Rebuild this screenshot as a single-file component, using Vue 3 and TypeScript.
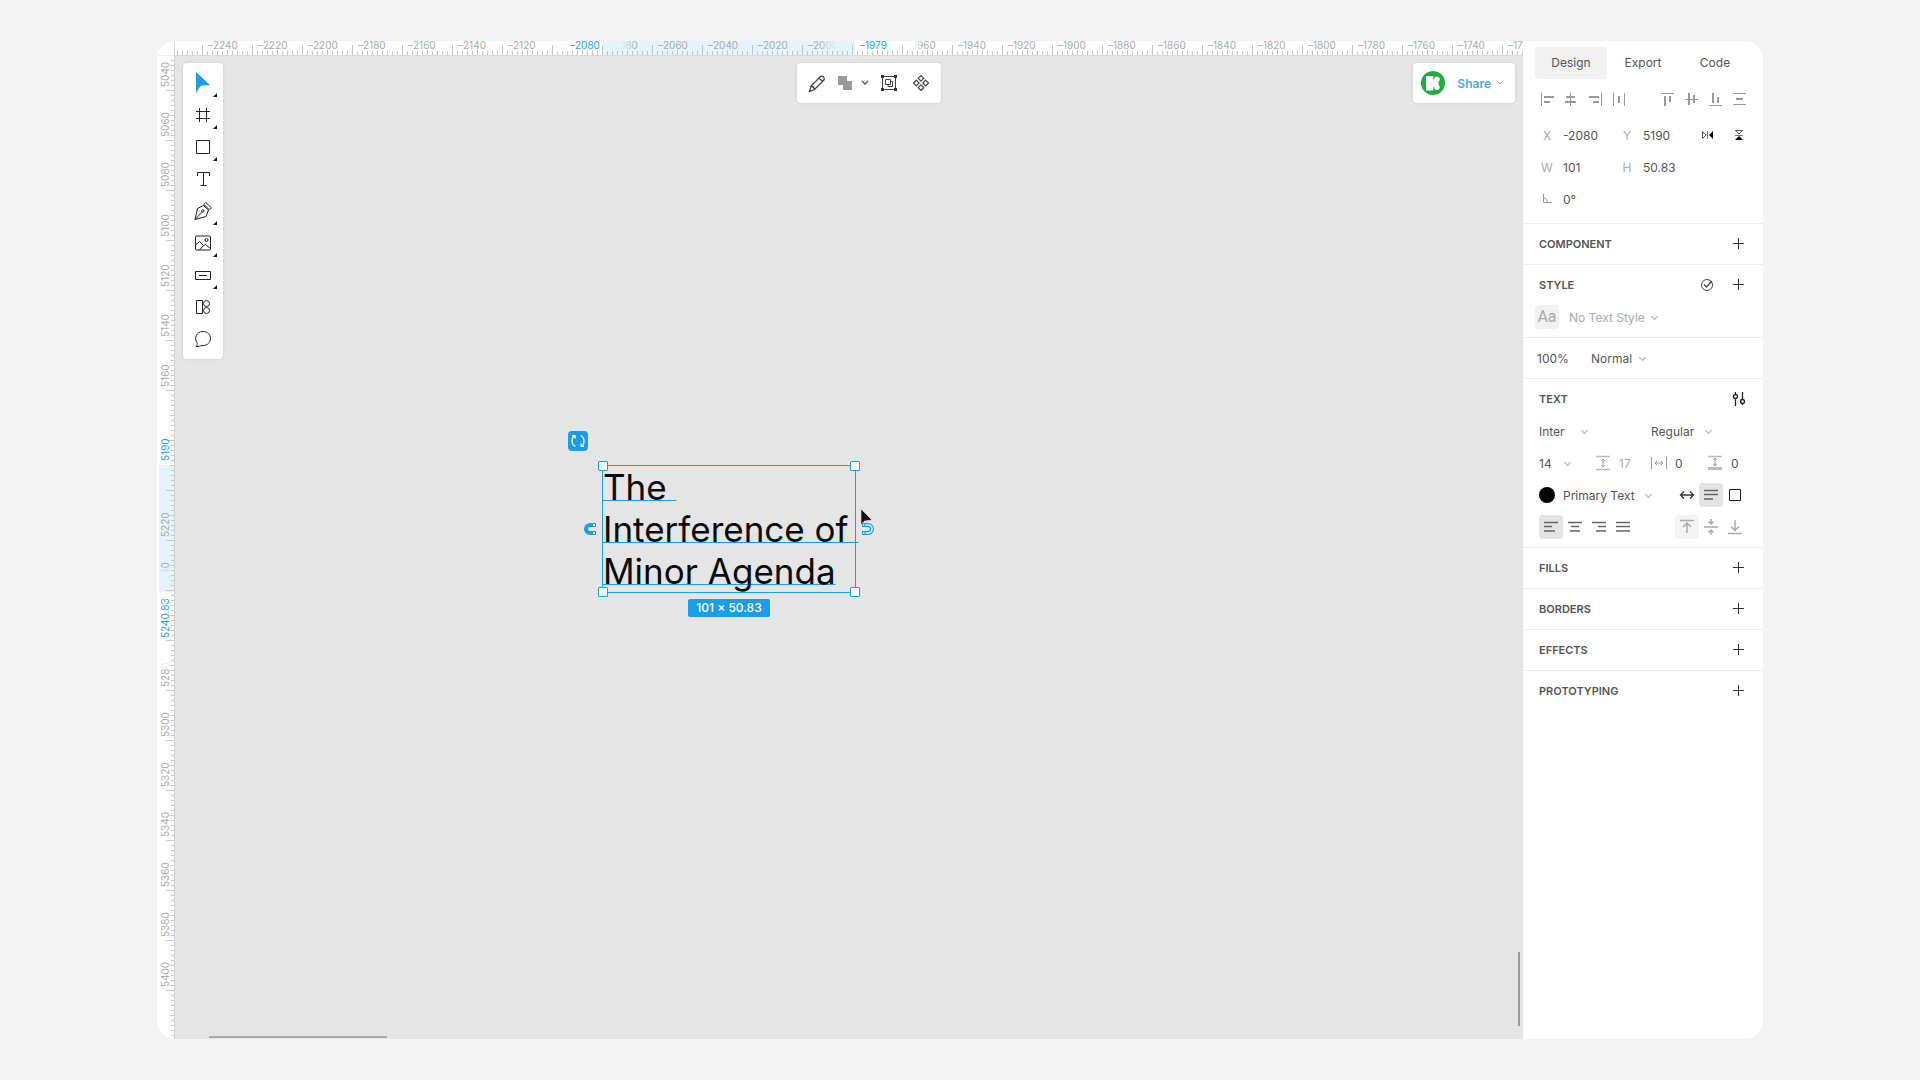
<script setup lang="ts">
import { ref } from 'vue'

interface Tool {
  name: string
  strokes: string
  fill?: string
  menu: boolean
}

interface Glyph {
  name: string
  light?: string
  bold?: string
}

const tools: Tool[] = [
  { name: 'Move', strokes: '', fill: 'M5 1 L19 14 L11 14.500 Q9.500 14.700 8.500 16.500 L5 22 Z', menu: true },
  { name: 'Frame', strokes: 'M8.500 5v14M15.500 5v14M5 8.500h14M5 15.500h14', menu: true },
  { name: 'Rectangle', strokes: 'M5.500 5.500h13v13h-13z', menu: true },
  { name: 'Text', strokes: 'M6.500 9V5.500h12V9M12.500 5.500v13M9.500 18.500h6', menu: false },
  { name: 'Pen', strokes: 'M4 20.500L6.500 9.500L12.500 6.500L17.500 11L15 17.500ZM4 20.500L11 13.200M13 12a1.200 1.200 0 1 1-2.400 0a1.200 1.200 0 1 1 2.400 0M12.800 5.500L14.800 3.500L20.500 8.800L18.500 10.800Z', menu: true },
  { name: 'Image', strokes: 'M5.500 5h13q1 0 1 1v12q0 1-1 1h-13q-1 0-1-1V6q0-1 1-1zM4.500 14L8.500 10.500L12.500 14.500L8.500 19M12 14.800L14.500 13.500L19.500 17.500M17 9a1.500 1.500 0 1 1-3 0a1.500 1.500 0 1 1 3 0', menu: true },
  { name: 'Button', strokes: 'M4.500 8.500h15v8h-15zM8 12.500h8', menu: true },
  { name: 'Components', strokes: 'M5.500 5.500h6v13h-6zM18.500 8.500a3 3 0 1 1-6 0a3 3 0 1 1 6 0M18.500 15.500a3 3 0 1 1-6 0a3 3 0 1 1 6 0', menu: false },
  { name: 'Comment', strokes: 'M12 4.500C16.500 4.500 19.500 7.500 19.500 11.500S16.500 18.500 12 18.500C9.500 18.500 8 19.800 5 19.500C6.500 18 6.500 16.500 5.800 15.500C3 11 5.500 4.500 12 4.500Z', menu: false },
]

const alignX: Glyph[] = [
  { name: 'Align left', light: 'M6.500 6v13', bold: 'M9 10h10M9 15h6' },
  { name: 'Align centre', light: 'M11.500 6v13', bold: 'M7 10h9M6 15h11' },
  { name: 'Align right', light: 'M18.500 6v13', bold: 'M6 10h10M10 15h6' },
  { name: 'Distribute horizontally', light: 'M6.500 6v13M17.500 6v13', bold: 'M12 9v7' },
]
const alignY: Glyph[] = [
  { name: 'Align top', light: 'M6 6.500h13', bold: 'M10 9v10M15 9v6' },
  { name: 'Align middle', light: 'M6 12.500h13', bold: 'M10 6v12M15 8v8' },
  { name: 'Align bottom', light: 'M6 18.500h13', bold: 'M10 6v10M15 10v6' },
  { name: 'Distribute vertically', light: 'M6 6.500h13M6 17.500h13', bold: 'M9 12h7' },
]
const textAlign: Glyph[] = [
  { name: 'Text left', bold: 'M5 7.500h14M5 11.500h8M5 16h11' },
  { name: 'Text centre', bold: 'M5 7.500h14M8 11.500h8M7 16h10' },
  { name: 'Text right', bold: 'M5 7.500h14M11 11.500h8M9 16h10' },
  { name: 'Text justify', bold: 'M5 7.500h14M5 11.500h14M5 16h14' },
]
const textVertical: Glyph[] = [
  { name: 'Text top', bold: 'M5 5.500h14M12 9v9M8 12l4-4l4 4' },
  { name: 'Text middle', bold: 'M5 12h14M12 4v5M9.500 6.500l2.500 2.500l2.500-2.500M12 20v-5M9.500 17.500l2.500-2.500l2.500 2.500' },
  { name: 'Text bottom', bold: 'M5 18.500h14M12 5v10M8 11.500l4 4l4-4' },
]

const tabs = ['Design', 'Export', 'Code']
const closed = ['Fills', 'Borders', 'Effects', 'Prototyping']
const activeTab = ref('Design')

// One ruler division is 20 canvas units, 50 screen pixels.
const STEP = 50
const topLabels = Array.from({ length: 27 }, (_, i) => ({ at: 27 + i * STEP, value: 2240 - i * 20 })).filter(
  (l) => l.value !== 2100 && l.value !== 1980,
)
const leftLabels = Array.from({ length: 19 }, (_, i) => ({ at: 34 + i * STEP, value: 5040 + i * 20 })).filter(
  (l) => ![5180, 5200, 5260].includes(l.value),
)
</script>

<template>
  <div class="page">
    <main class="window">
      <section class="workspace">
        <div class="corner"></div>
        <svg class="ruler-top" width="100%" height="14" aria-label="Horizontal ruler">
          <defs>
            <pattern id="ticks-x" x="27" y="0" width="50" height="14" patternUnits="userSpaceOnUse">
              <path d="M0 4h1v10h-1z" fill="#c4c4c4" />
              <path
                d="M5 10h1v4h-1zM10 10h1v4h-1zM15 10h1v4h-1zM20 10h1v4h-1zM25 9h1v5h-1zM30 10h1v4h-1zM35 10h1v4h-1zM40 10h1v4h-1zM45 10h1v4h-1z"
                fill="#c4c4c4"
              />
            </pattern>
            <linearGradient id="fade-blue">
              <stop offset="0.500" stop-color="#e4f3fc" />
              <stop offset="1" stop-color="#e4f3fc" stop-opacity="0" />
            </linearGradient>
            <linearGradient id="fade-blue-end">
              <stop offset="0" stop-color="#e4f3fc" stop-opacity="0" />
              <stop offset="0.500" stop-color="#e4f3fc" />
            </linearGradient>
            <linearGradient id="fade-white">
              <stop offset="0.850" stop-color="#fff" />
              <stop offset="1" stop-color="#fff" stop-opacity="0" />
            </linearGradient>
          </defs>
          <rect x="428" y="0" width="252" height="14" fill="#e4f3fc" />
          <text v-for="l in topLabels" :key="l.at" :x="l.at + 6" y="8" class="tick-label">–{{ l.value }}</text>
          <rect x="428" y="0" width="34" height="9" fill="url(#fade-blue)" />
          <rect x="643" y="0" width="37" height="9" fill="url(#fade-blue-end)" />
          <rect x="680" y="0" width="68" height="9" fill="url(#fade-white)" />
          <rect width="100%" height="14" fill="url(#ticks-x)" />
          <text x="395" y="8" class="tick-label on">–2080</text>
          <text x="685" y="8" class="tick-label on">–1979</text>
        </svg>
        <svg class="ruler-left" width="17" height="100%" aria-label="Vertical ruler">
          <defs>
            <pattern id="ticks-y" x="0" y="34" width="17" height="50" patternUnits="userSpaceOnUse">
              <path
                d="M9 0h8v1h-8zM14 5h3v1h-3zM14 10h3v1h-3zM14 15h3v1h-3zM14 20h3v1h-3zM13 25h4v1h-4zM14 30h3v1h-3zM14 35h3v1h-3zM14 40h3v1h-3zM14 45h3v1h-3z"
                fill="#cacaca"
              />
            </pattern>
            <linearGradient id="fade-down" x1="0" y1="0" x2="0" y2="1">
              <stop offset="0.150" stop-color="#e4f3fc" stop-opacity="0" />
              <stop offset="0.400" stop-color="#e4f3fc" />
            </linearGradient>
          </defs>
          <rect x="2" y="409" width="15" height="127" fill="#e4f3fc" />
          <text
            v-for="l in leftLabels"
            :key="l.value"
            :transform="`translate(12 ${l.at - 3}) rotate(-90)`"
            class="tick-label"
          >{{ l.value }}</text>
          <rect x="2" y="506" width="10" height="26" fill="url(#fade-down)" />
          <rect x="2" y="604" width="10" height="8" fill="#fff" opacity="0.800" />
          <rect width="17" height="100%" fill="url(#ticks-y)" />
          <text transform="translate(12 405) rotate(-90)" class="tick-label on">5190</text>
          <text transform="translate(12 582) rotate(-90)" class="tick-label on">5240.83</text>
        </svg>

        <div class="canvas">
          <nav class="tools card" aria-label="Tools">
            <button v-for="t in tools" :key="t.name" type="button" :aria-label="t.name">
              <svg width="24" height="24" viewBox="0 0 24 24">
                <path v-if="t.fill" :d="t.fill" fill="#1b9ee8" />
                <path v-else :d="t.strokes" fill="none" stroke="#222" />
              </svg>
              <i v-if="t.menu" class="more"></i>
            </button>
          </nav>
          <div class="top-row">
            <div class="actions card">
              <button type="button" class="w32" aria-label="Edit">
                <svg width="24" height="24" viewBox="0 0 24 24" fill="none" stroke="#444">
                  <path d="M4.500 20.500L6 15L15.500 5.500Q17 4.500 18.500 6Q20 7.500 19 9L9.500 18.500ZM6 15Q9 15.500 9.500 18.500M14 7L17.500 10.500" stroke-width="1.300" />
                </svg>
              </button>
              <button type="button" class="w24" aria-label="Union">
                <svg width="24" height="24" viewBox="0 0 24 24"><path d="M5 5h9v5h5v9h-9v-5h-5z" fill="#999" /></svg>
              </button>
              <button type="button" class="w16" aria-label="Boolean options">
                <svg width="8" height="6" viewBox="0 0 8 6" fill="none" stroke="#555" stroke-width="1.300"><path d="M1 1l3 3l3-3" /></svg>
              </button>
              <button type="button" class="w32" aria-label="Group">
                <svg width="24" height="24" viewBox="0 0 24 24" fill="none" stroke="#444">
                  <path d="M5.500 5.500h13v13h-13zM8.500 8.500h5v5h-5zM11 13.500v2h4.500v-5h-2" />
                  <path d="M4 4h3v3h-3zM17 4h3v3h-3zM4 17h3v3h-3zM17 17h3v3h-3z" fill="#333" stroke="none" />
                </svg>
              </button>
              <button type="button" class="w32" aria-label="Create component">
                <svg width="24" height="24" viewBox="0 0 24 24" fill="none" stroke="#444" stroke-width="1.200">
                  <path d="M12 4.500L14.800 7.300L12 10.100L9.200 7.300ZM12 13.900L14.800 16.700L12 19.500L9.200 16.700ZM7.300 9.200L10.100 12L7.300 14.800L4.500 12ZM16.700 9.200L19.500 12L16.700 14.800L13.900 12Z" />
                </svg>
              </button>
            </div>
            <div class="share card">
              <svg width="24" height="24" viewBox="0 0 24 24" role="img" aria-label="Account">
                <circle cx="12" cy="12" r="12" fill="#22ac40" />
                <rect x="5" y="5" width="7.500" height="14.500" rx="0.800" fill="#fff" />
                <rect x="12" y="9" width="4" height="6.500" fill="#fff" />
                <circle cx="16" cy="8.300" r="2.700" fill="#fff" />
                <circle cx="16" cy="16.200" r="2.700" fill="#fff" />
                <rect x="14" y="10.500" width="3.500" height="3.500" fill="#fff" />
              </svg>
              <button type="button" class="share-btn">
                Share
                <svg width="8" height="6" viewBox="0 0 8 6" fill="none" stroke="#7cc4f0"><path d="M1 1l3 3l3-3" /></svg>
              </button>
            </div>
          </div>

          <button type="button" class="rotate" aria-label="Rotate">
            <svg width="20" height="20" viewBox="0 0 20 20" fill="none" stroke="#fff" stroke-width="1.200">
              <path d="M7.500 15.500C3 13.500 3 7 6.500 4.700M4 4.500h3v3M12.500 4.500C17 6.500 17 13 13.500 15.300M16 15.500h-3v-3" />
            </svg>
          </button>
          <div class="selection">
            <p class="copy"><span>The </span><br /><span>Interference of </span><br /><span>Minor Agenda</span></p>
            <i class="handle nw"></i><i class="handle ne"></i><i class="handle sw"></i><i class="handle se"></i>
            <svg class="magnet left" width="14" height="14" viewBox="0 0 14 14">
              <path d="M13 3H7a4 4 0 0 0 0 8H13" fill="none" stroke="#1b9ee8" stroke-width="4" />
              <path d="M10 2h2v2h-2zM10 10h2v2h-2z" fill="#fff" />
            </svg>
            <svg class="magnet right" width="14" height="14" viewBox="0 0 14 14">
              <path d="M1 3H7a4 4 0 0 1 0 8H1" fill="none" stroke="#1b9ee8" stroke-width="4" />
              <path d="M2 3H7a4 4 0 0 1 0 8H2" fill="none" stroke="#e5f3fc" stroke-width="1.600" />
              <path d="M4 1v4M4 9v4" stroke="#1b9ee8" />
            </svg>
            <svg class="cursor" width="14" height="18" viewBox="0 0 14 18">
              <path d="M1 0V16L4.500 12L12 11Z" fill="#111" stroke="#e5e5e5" stroke-width="0.600" />
            </svg>
            <output class="size">101 × 50.83</output>
          </div>
          <i class="scroll-x"></i>
          <i class="scroll-y"></i>
        </div>
      </section>

      <aside class="panel">
        <div class="geometry">
          <div class="tabs" role="tablist">
            <button
              v-for="t in tabs"
              :key="t"
              type="button"
              role="tab"
              :class="{ active: t === activeTab }"
              @click="activeTab = t"
            >{{ t }}</button>
          </div>
          <div class="align">
            <div v-for="(set, i) in [alignX, alignY]" :key="i" class="cells">
              <button v-for="g in set" :key="g.name" type="button" class="cell" :aria-label="g.name">
                <svg width="24" height="24" viewBox="0 0 24 24" fill="none">
                  <path :d="g.light" stroke="#999" />
                  <path :d="g.bold" stroke="#999" stroke-width="2" />
                </svg>
              </button>
            </div>
          </div>
          <div class="row">
            <label class="field"><span>X</span><input value="-2080" /></label>
            <label class="field"><span>Y</span><input value="5190" /></label>
            <button type="button" class="cell" aria-label="Flip horizontally">
              <svg width="24" height="24" viewBox="0 0 24 24">
                <path d="M7.500 8.500v7l3.500-3.500z" fill="none" stroke="#555" />
                <path d="M12 8h1v8h-1z" fill="#777" />
                <path d="M18 8v8l-4-4z" fill="#000" />
              </svg>
            </button>
            <button type="button" class="cell push" aria-label="Flip vertically">
              <svg width="24" height="24" viewBox="0 0 24 24">
                <path d="M8.500 7.500h7l-3.500 3.500z" fill="none" stroke="#555" />
                <path d="M8 12h8v1h-8z" fill="#777" />
                <path d="M8 17h8l-4-4z" fill="#000" />
              </svg>
            </button>
          </div>
          <div class="row">
            <label class="field"><span>W</span><input value="101" /></label>
            <label class="field"><span>H</span><input value="50.83" /></label>
          </div>
          <div class="row">
            <label class="field">
              <svg width="24" height="24" viewBox="0 0 24 24" fill="none" stroke="#999" role="img" aria-label="Rotation">
                <path d="M8.500 7v8.500h8M8.500 10.500q4 1 4 5" />
              </svg>
              <input value="0°" />
            </label>
          </div>
        </div>

        <section class="block">
          <div class="head">
            <h2>Component</h2>
            <button type="button" class="cell push plus" aria-label="Add component"></button>
          </div>
        </section>

        <section class="block">
          <div class="head">
            <h2>Style</h2>
            <button type="button" class="cell push" aria-label="Detach style">
              <svg width="24" height="24" viewBox="0 0 24 24" fill="none" stroke="#444">
                <circle cx="12" cy="12" r="5.500" /><path d="M9 11.500l2.500 2.500l5.500-6" stroke-width="1.300" />
              </svg>
            </button>
            <button type="button" class="cell plus gap8" aria-label="Add style"></button>
          </div>
          <div class="row muted">
            <span class="aa">Aa</span>
            <label class="pick after-icon"><select aria-label="Text style"><option>No Text Style</option></select><i class="chev"></i></label>
          </div>
        </section>

        <section class="block">
          <div class="row">
            <input class="opacity" value="100%" aria-label="Opacity" />
            <label class="pick"><select aria-label="Blend mode"><option>Normal</option></select><i class="chev"></i></label>
          </div>
        </section>

        <section class="block">
          <div class="head">
            <h2>Text</h2>
            <button type="button" class="cell push" aria-label="Text settings">
              <svg width="24" height="24" viewBox="0 0 24 24" fill="none" stroke="#222">
                <path d="M8.500 5v2.500M8.500 11.500V19M15.500 5v7.500M15.500 16.500V18M10.500 9.500a2 2 0 1 1-4 0a2 2 0 1 1 4 0M17.500 14.500a2 2 0 1 1-4 0a2 2 0 1 1 4 0" stroke-width="1.300" />
              </svg>
            </button>
          </div>
          <div class="row inset">
            <label class="pick font"><select aria-label="Font family"><option>Inter</option></select><i class="chev"></i></label>
            <label class="pick weight"><select aria-label="Font weight"><option>Regular</option></select><i class="chev"></i></label>
          </div>
          <div class="row inset metrics">
            <label class="pick"><select aria-label="Font size"><option>14</option></select><i class="chev"></i></label>
            <label class="metric muted">
              <svg width="24" height="24" viewBox="0 0 24 24" fill="none" stroke="#bbb" role="img" aria-label="Line height">
                <path d="M5 5.500h14M5 18.500h14" stroke-width="1.500" /><path d="M12 8v8M10 10l2-2l2 2M10 14l2 2l2-2" stroke="#999" />
              </svg>
              <input value="17" />
            </label>
            <label class="metric">
              <svg width="24" height="24" viewBox="0 0 24 24" fill="none" stroke="#999" role="img" aria-label="Letter spacing">
                <path d="M4.500 6v12M19.500 6v12M8 12h8M10 10l-2 2l2 2M14 10l2 2l-2 2" />
              </svg>
              <input value="0" />
            </label>
            <label class="metric">
              <svg width="24" height="24" viewBox="0 0 24 24" fill="none" stroke="#bbb" role="img" aria-label="Paragraph spacing">
                <path d="M5 5.500h14" stroke-width="1.500" /><path d="M5 17.500h14" stroke-width="3" /><path d="M12 7v8M10 9l2-2l2 2M10 13l2 2l2-2" stroke="#999" />
              </svg>
              <input value="0" />
            </label>
          </div>
          <div class="row inset">
            <i class="swatch"></i>
            <label class="pick colour"><select aria-label="Text colour"><option>Primary Text</option></select><i class="chev"></i></label>
            <div class="cells push">
              <button type="button" class="cell" aria-label="Auto width">
                <svg width="24" height="24" viewBox="0 0 24 24" fill="none" stroke="#333" stroke-width="1.300"><path d="M6 12h12M9 8.500l-3.500 3.500l3.500 3.500M15 8.500l3.500 3.500l-3.500 3.500" /></svg>
              </button>
              <button type="button" class="cell pressed" aria-label="Auto height">
                <svg width="24" height="24" viewBox="0 0 24 24" fill="none" stroke="#666" stroke-width="1.500"><path d="M5 7.500h14M5 11.500h14M5 16h9" /></svg>
              </button>
              <button type="button" class="cell" aria-label="Fixed size">
                <svg width="24" height="24" viewBox="0 0 24 24" fill="none" stroke="#222"><path d="M6.500 6.500h11v11h-11z" /></svg>
              </button>
            </div>
          </div>
          <div class="row inset">
            <div class="cells">
              <button v-for="(g, i) in textAlign" :key="g.name" type="button" class="cell" :class="{ pressed: i === 0 }" :aria-label="g.name">
                <svg width="24" height="24" viewBox="0 0 24 24" fill="none" stroke="#666" stroke-width="1.500"><path :d="g.bold" /></svg>
              </button>
            </div>
            <div class="cells push">
              <button v-for="(g, i) in textVertical" :key="g.name" type="button" class="cell" :class="{ soft: i === 0 }" :aria-label="g.name">
                <svg width="24" height="24" viewBox="0 0 24 24" fill="none" stroke="#aaa" stroke-width="1.500"><path :d="g.bold" /></svg>
              </button>
            </div>
          </div>
        </section>

        <section v-for="name in closed" :key="name" class="block">
          <div class="head">
            <h2>{{ name }}</h2>
            <button type="button" class="cell push plus" :aria-label="'Add ' + name"></button>
          </div>
        </section>
      </aside>
    </main>
  </div>
</template>

<style>
body {
  margin: 0;
  background: #f3f3f3;
}
</style>

<style scoped>
.page {
  display: flex;
  min-height: 100vh;
  box-sizing: border-box;
  padding: 41px 157px;
  font-family: Inter, 'Liberation Sans', sans-serif;
  font-size: 12px;
  color: #555;
}
.window {
  flex: 1;
  display: flex;
  border-radius: 18px;
  overflow: hidden;
  background: #fff;
}
button,
input,
select {
  appearance: none;
  margin: 0;
  padding: 0;
  border: 0;
  background: none;
  font: inherit;
  color: inherit;
  outline: none;
}
button {
  display: flex;
  align-items: center;
  justify-content: center;
}
svg {
  display: block;
  flex: none;
}

/* workspace and rulers */
.workspace {
  flex: 1;
  min-width: 0;
  display: grid;
  grid-template-columns: 18px 1fr;
  grid-template-rows: 15px 1fr;
}
.corner {
  border-right: 1px solid #d4d4d4;
  border-bottom: 1px solid #eee;
}
.ruler-top {
  border-bottom: 1px solid #d9d9d9;
}
.ruler-left {
  border-right: 1px solid #d0d0d0;
}
.tick-label {
  font-size: 10px;
  fill: #aaa;
}
.tick-label.on {
  fill: #1b9ee8;
}
.canvas {
  position: relative;
  display: flex;
  align-items: flex-start;
  padding: 7px 8px;
  background: #e5e5e5;
}
.card {
  background: #fff;
  border-radius: 4px;
  box-shadow: 0 0 3px rgba(0, 0, 0, 0.12);
}
.tools {
  width: 40px;
  padding: 4px 0;
}
.tools button {
  position: relative;
  width: 40px;
  height: 32px;
}
.more {
  position: absolute;
  right: 6px;
  bottom: 2px;
  border: 2px solid transparent;
  border-right-color: #111;
  border-bottom-color: #111;
}
.top-row {
  flex: 1;
  display: grid;
  grid-template-columns: 1fr auto 1fr;
}
.actions {
  grid-column: 2;
  display: flex;
  height: 40px;
  padding: 0 4px;
}
.w32 {
  width: 32px;
}
.w24 {
  width: 24px;
}
.w16 {
  width: 16px;
}
.share {
  justify-self: end;
  display: flex;
  align-items: center;
  gap: 12px;
  height: 40px;
  padding: 0 11px 0 8px;
}
.share-btn {
  gap: 5px;
  font-weight: 600;
  color: #4aa8ea;
}

/* selected text layer */
.rotate {
  position: absolute;
  left: 393px;
  top: 375px;
  width: 20px;
  height: 20px;
  border-radius: 4px;
  background: #1b9ee8;
}
.selection {
  position: absolute;
  left: 427px;
  top: 409px;
  width: 252px;
  height: 126px;
  border: 1px solid #1b9ee8;
}
.copy {
  margin: 0;
  font-size: 35px;
  line-height: 42px;
  color: #0a0a0a;
  white-space: pre;
}
.copy span {
  text-decoration: underline 1px #1b9ee8;
  text-decoration-skip-ink: none;
  text-underline-offset: 0;
}
.handle {
  position: absolute;
  width: 8px;
  height: 8px;
  border: 1px solid #1b9ee8;
  border-radius: 1px;
  background: #fff;
}
.nw,
.sw {
  left: -5px;
}
.ne,
.se {
  right: -5px;
}
.nw,
.ne {
  top: -5px;
}
.sw,
.se {
  bottom: -5px;
}
.magnet {
  position: absolute;
  top: 56px;
}
.magnet.left {
  left: -20px;
}
.magnet.right {
  right: -20px;
}
.cursor {
  position: absolute;
  left: 257px;
  top: 43px;
}
.size {
  position: absolute;
  left: 85px;
  top: 133px;
  width: 82px;
  border-radius: 2px;
  background: #1b9ee8;
  color: #fff;
  font-weight: 500;
  line-height: 18px;
  text-align: center;
}
.scroll-x {
  position: absolute;
  left: 34px;
  bottom: 1px;
  width: 178px;
  height: 2px;
  background: #aaa;
}
.scroll-y {
  position: absolute;
  right: 3px;
  bottom: 13px;
  width: 2px;
  height: 74px;
  background: #999;
}

/* inspector */
.panel {
  width: 240px;
  flex: none;
}
.geometry {
  padding: 6px 0 8px;
  border-bottom: 1px solid #eee;
}
.tabs,
.align {
  display: flex;
  padding: 0 12px;
}
.tabs button {
  flex: 1;
  height: 32px;
  padding-bottom: 2px;
  border-radius: 4px;
}
.tabs .active {
  background: #f1f1f1;
}
.align {
  align-items: center;
  justify-content: space-between;
  height: 40px;
}
.cells {
  display: flex;
}
.cell {
  flex: none;
  width: 24px;
  height: 24px;
  border-radius: 4px;
}
.push {
  margin-left: auto;
}
.gap8 {
  margin-left: 8px;
}
.row,
.head {
  display: flex;
  align-items: center;
  height: 32px;
  padding: 0 12px;
}
.head {
  padding-left: 16px;
}
.row.inset {
  padding: 0 16px;
}
.block {
  padding: 4px 0;
  border-bottom: 1px solid #eee;
}
.block:last-child {
  border-bottom: 0;
}
h2 {
  margin: 0;
  font-size: 11px;
  font-weight: 600;
  text-transform: uppercase;
}
.plus {
  background:
    linear-gradient(#333, #333) 6px 11px / 11px 1px no-repeat,
    linear-gradient(#333, #333) 11px 6px / 1px 11px no-repeat;
}
.field {
  display: flex;
  align-items: center;
  gap: 4px;
  width: 80px;
}
.field span {
  width: 24px;
  text-align: center;
  color: #aaa;
}
.field input {
  width: 52px;
}
.muted {
  color: #aaa;
}
.aa {
  width: 24px;
  border-radius: 4px;
  background: #f1f1f1;
  font-family: Roboto, sans-serif;
  font-size: 16px;
  line-height: 24px;
  text-align: center;
}
.pick {
  display: flex;
  align-items: center;
  gap: 6px;
}
.after-icon {
  margin-left: 10px;
}
.chev {
  width: 4px;
  height: 4px;
  margin: 0 1px 2px;
  border: solid #aaa;
  border-width: 0 1px 1px 0;
  transform: rotate(45deg);
}
.opacity {
  width: 54px;
  margin-left: 2px;
}
.font {
  width: 112px;
  gap: 16px;
}
.weight {
  gap: 10px;
}
.metrics .pick {
  flex: none;
  width: 52px;
  gap: 12px;
}
.row.metrics {
  padding-right: 0;
}
.metric {
  flex: none;
  display: flex;
  align-items: center;
  gap: 4px;
  width: 56px;
}
.metric input {
  width: 20px;
}
.swatch {
  width: 16px;
  height: 16px;
  border-radius: 50%;
  background: #000;
}
.colour {
  margin-left: 8px;
  gap: 10px;
}
.pressed {
  background: #e3e3e3;
}
.soft {
  background: #f4f4f4;
}
</style>
